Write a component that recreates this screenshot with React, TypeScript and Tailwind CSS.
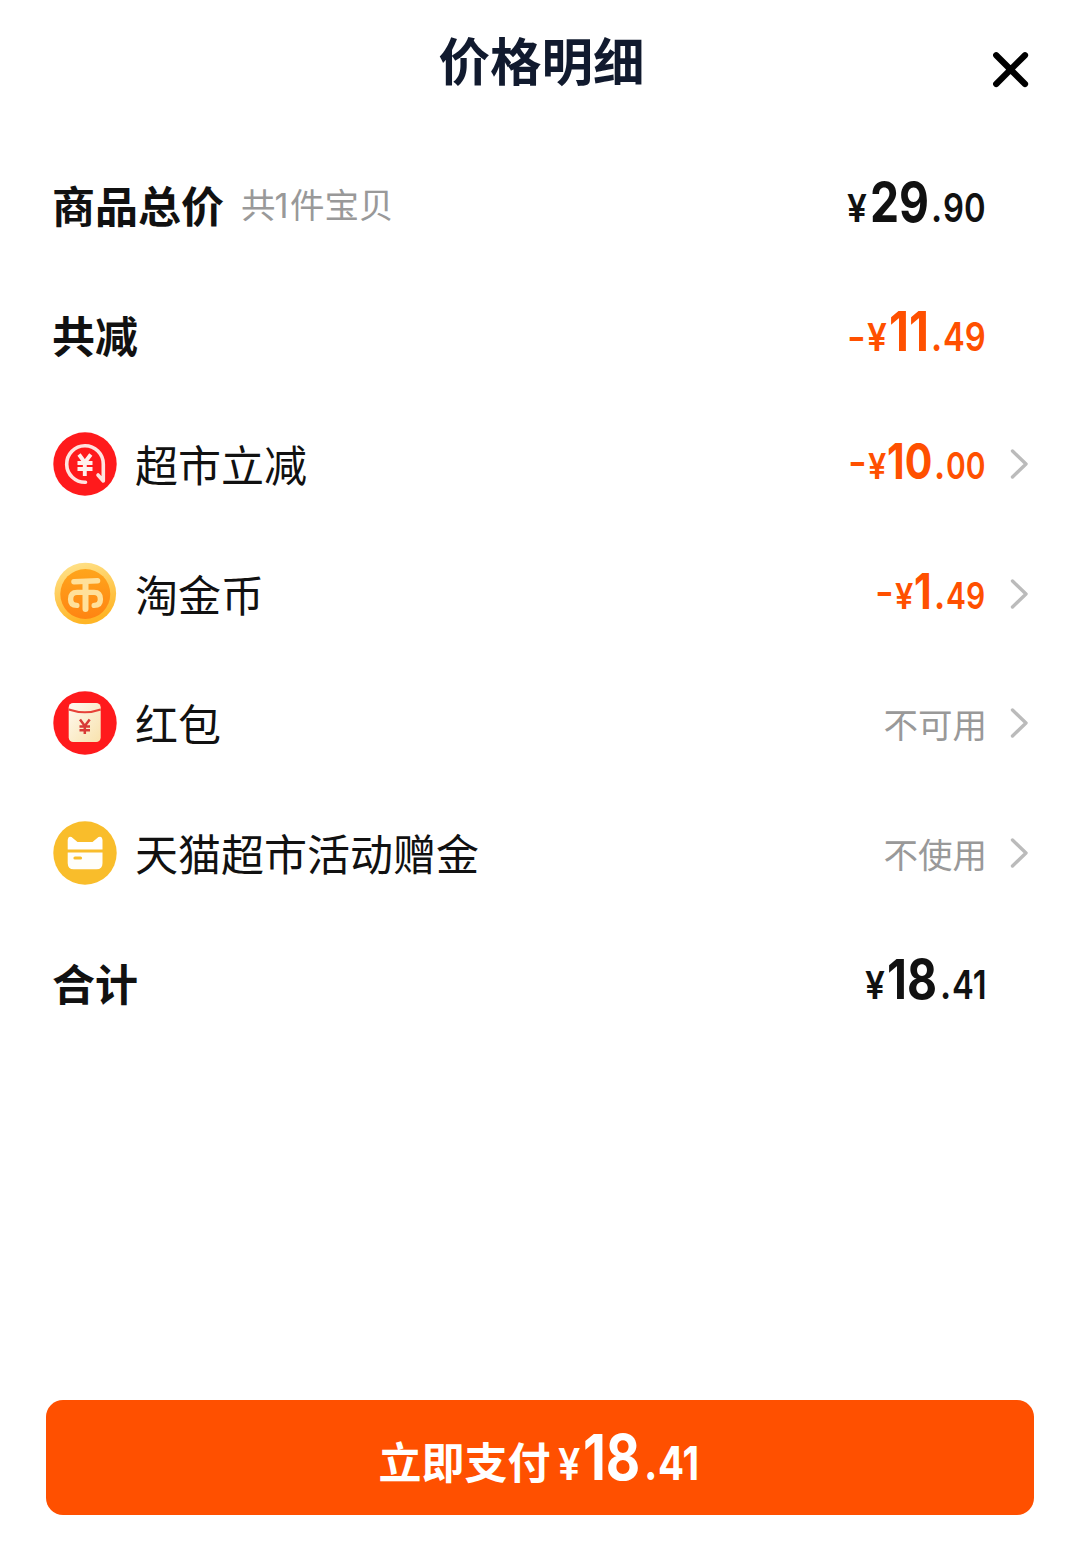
import React from 'react';
import clsx from 'clsx';

type Part = { text: string; className: string };

type Item = {
  label: string;
  icon?: React.ReactNode;
  note?: React.ReactNode;
  price?: Part[];
  status?: string;
  accent?: boolean;
};

const Price: React.FC<{ parts: Part[]; className?: string }> = ({ parts, className }) => (
  <div className={clsx("flex items-baseline whitespace-nowrap font-semibold leading-none font-['Inter',sans-serif]", className)}>
    {parts.map((part, i) => (
      <span key={i} className={clsx('block shrink-0 origin-left', part.className)}>{part.text}</span>
    ))}
  </div>
);

const DiscountIcon = () => (
  <svg viewBox="0 0 64 64" className="size-16">
    <circle cx="32" cy="32" r="31.7" fill="#ff1a1c" />
    <path d="M32.5 50.3A18.3 18.3 0 1 1 50.3 32V49L45 43" fill="none" stroke="#ffe4e0" strokeWidth="3.6" strokeLinejoin="round" strokeLinecap="round" />
    <path d="M26 22.5L31.8 30.5L37.8 22.5M24.5 31H39.5M24.5 37H39.5M31.8 30V44" fill="none" stroke="#fff0ed" strokeWidth="3.9" />
  </svg>
);

const CoinIcon = () => (
  <svg viewBox="0 0 64 64" className="size-16">
    <defs>
      <linearGradient id="coinRim" x1="0" y1="0" x2="0.3" y2="1">
        <stop offset="0" stopColor="#ffe591" />
        <stop offset="1" stopColor="#ffb526" />
      </linearGradient>
      <linearGradient id="coinFace" x1="0" y1="0" x2="0" y2="1">
        <stop offset="0" stopColor="#ffa51c" />
        <stop offset="1" stopColor="#ff8412" />
      </linearGradient>
    </defs>
    <circle cx="32.3" cy="31.5" r="30.8" fill="url(#coinRim)" />
    <circle cx="32.3" cy="32" r="25" fill="url(#coinFace)" />
    <path d="M21 19.7L44.5 18.7" fill="none" stroke="#ffe09a" strokeWidth="5.6" strokeLinecap="round" />
    <path d="M32.5 20V47" fill="none" stroke="#ffe09a" strokeWidth="6" strokeLinecap="round" />
    <path d="M23.8 43.4Q17.6 43.4 17.6 37.2Q17.6 30.4 24 30.4H41Q47.4 30.4 47.4 37.2Q47.4 43.4 41.2 43.4" fill="none" stroke="#ffe09a" strokeWidth="5.4" strokeLinecap="round" />
  </svg>
);

const RedPacketIcon = () => (
  <svg viewBox="0 0 64 64" className="size-16">
    <defs>
      <linearGradient id="packet" x1="0" y1="0" x2="1" y2="1">
        <stop offset="0" stopColor="#fffaf0" />
        <stop offset="1" stopColor="#f8e2ad" />
      </linearGradient>
    </defs>
    <circle cx="32" cy="32" r="31.7" fill="#ff1a1c" />
    <rect x="15.7" y="12" width="32" height="39" rx="4.5" fill="url(#packet)" />
    <path d="M15.7 18.5Q32 24 47.7 18.5" fill="none" stroke="#e74238" strokeWidth="2.2" />
    <path d="M27 28.5L31.8 35L36.7 28.5M26.5 35.5H37M26.5 39.3H37M31.8 34V43" fill="none" stroke="#d83a36" strokeWidth="2.5" />
  </svg>
);

const CatCardIcon = () => (
  <svg viewBox="0 0 64 64" className="size-16">
    <circle cx="32" cy="32" r="31.7" fill="#f9bd2b" />
    <path d="M14.7 28.5V19Q15.3 14.5 18.5 16L24.5 21H39.5L45.5 16Q49 14.5 49.5 19V28.5Z" fill="#fff" />
    <path d="M14.7 31.5H49.5V42Q49.5 48.3 43.5 48.3H20.7Q14.7 48.3 14.7 42Z" fill="#fffefa" />
    <path d="M22 37H27.5" stroke="#f9bd2b" strokeWidth="3.2" strokeLinecap="round" />
  </svg>
);

const yen = 'text-[38px] scale-x-[.93]';
const big = 'text-[55px] font-bold scale-x-[.84]';
const small = 'text-[39px] scale-x-[.84]';
const midYen = 'text-[35px] scale-x-[.93]';
const midBig = 'text-[50px] font-bold scale-x-[.82]';
const midSmall = 'text-[37px] scale-x-[.81]';
const dot = 'text-[39px] font-bold scale-x-[.86]';
const minus = 'text-[39px] font-semibold scale-x-[1.04] w-[20px]';

const items: Item[] = [
  {
    label: '商品总价',
    note: <>共<span className="-ml-px inline-block w-[15.5px] font-['Inter',sans-serif]">1</span>件宝贝</>,
    price: [
      { text: '¥', className: `${yen} w-[23px]` },
      { text: '29', className: `${big} w-[61px]` },
      { text: '.', className: `${dot} w-[12px]` },
      { text: '90', className: `${small} w-[43px]` },
    ],
  },
  {
    label: '共减',
    accent: true,
    price: [
      { text: '-', className: minus },
      { text: '¥', className: `${yen} w-[22px]` },
      { text: '11', className: `${big} w-[42px]` },
      { text: '.', className: `${dot} w-[12px]` },
      { text: '49', className: `${small} w-[43px]` },
    ],
  },
  {
    label: '超市立减',
    icon: <DiscountIcon />,
    accent: true,
    price: [
      { text: '-', className: `${minus} relative -top-[3px]` },
      { text: '¥', className: `${midYen} w-[19px]` },
      { text: '10', className: `${midBig} w-[48px]` },
      { text: '.', className: `${dot} -ml-px w-[12px]` },
      { text: '00', className: `${midSmall} w-[40px]` },
    ],
  },
  {
    label: '淘金币',
    icon: <CoinIcon />,
    accent: true,
    price: [
      { text: '-', className: `${minus} relative -top-[3px]` },
      { text: '¥', className: `${midYen} w-[19px]` },
      { text: '1', className: `${midBig} w-[21px]` },
      { text: '.', className: `${dot} -ml-px w-[12px]` },
      { text: '49', className: `${midSmall} w-[40px]` },
    ],
  },
  { label: '红包', icon: <RedPacketIcon />, status: '不可用' },
  { label: '天猫超市活动赠金', icon: <CatCardIcon />, status: '不使用' },
  {
    label: '合计',
    price: [
      { text: '¥', className: `${yen} w-[22px]` },
      { text: '18', className: `${big} w-[53px]` },
      { text: '.', className: `${dot} w-[12px]` },
      { text: '41', className: `${small} w-[34px]` },
    ],
  },
];

const payPrice: Part[] = [
  { text: '¥', className: 'text-[44px] scale-x-[.9] w-[25px]' },
  { text: '18', className: 'text-[63px] font-bold scale-x-[.84] w-[61px]' },
  { text: '.', className: 'text-[47px] font-bold scale-x-[.86] w-[14px]' },
  { text: '41', className: 'text-[47px] font-bold scale-x-[.82] w-[43px]' },
];

const Row: React.FC<{ item: Item }> = ({ item }) => (
  <li className="flex h-[129.6px] items-center pl-[53px] pr-[51px] text-[#111]">
    {item.icon && <div className="mr-[18px] shrink-0">{item.icon}</div>}
    <span className={clsx('whitespace-nowrap text-[43px] leading-none', item.icon ? 'pb-px font-normal' : '-ml-px font-bold')}>{item.label}</span>
    {item.note && <span className="ml-[17px] whitespace-nowrap text-[34.5px] leading-none text-[#999]">{item.note}</span>}
    <div className="ml-auto flex items-center">
      {item.price && (
        <Price
          parts={item.price}
          className={clsx(item.accent ? 'text-[#ff5000]' : 'text-[#111]', item.icon ? 'pb-1.5' : 'pb-[5px]')}
        />
      )}
      {item.status && <span className="-mr-px text-[34.5px] leading-none text-[#999]">{item.status}</span>}
      <div className="ml-[22px] w-[21px]">
        {item.icon && (
          <svg viewBox="0 0 20 32" className="ml-px h-8 w-5" fill="none" stroke="#bbb" strokeWidth="3.4" strokeLinecap="round" strokeLinejoin="round">
            <path d="M3.5 3L17 16L3.5 29" />
          </svg>
        )}
      </div>
    </div>
  </li>
);

export default function App() {
  return (
    <div className="flex h-[1560px] w-[1080px] flex-col bg-white font-['Noto_Sans_CJK_SC',sans-serif]">
      <header className="relative h-[140px] pl-[3px] pt-[33px] text-center">
        <h1 className="text-[51.5px] font-bold leading-none text-[#111a2e]">价格明细</h1>
        <button aria-label="关闭" className="absolute right-[49px] top-[50px]">
          <svg viewBox="0 0 40 40" className="size-10" fill="none" stroke="#000" strokeWidth="6.2" strokeLinecap="round">
            <path d="M5.2 5.2L34 34M34 5.2L5.2 34" />
          </svg>
        </button>
      </header>

      <ul>
        {items.map((item) => <Row key={item.label} item={item} />)}
      </ul>

      <button className="mx-[46px] mb-[45px] mt-auto flex h-[115px] items-center justify-center rounded-[17px] bg-[#ff5000] pr-px text-white">
        <span className="mr-[7px] pt-1.5 text-[43px] font-bold leading-none">立即支付</span>
        <Price parts={payPrice} />
      </button>
    </div>
  );
}
